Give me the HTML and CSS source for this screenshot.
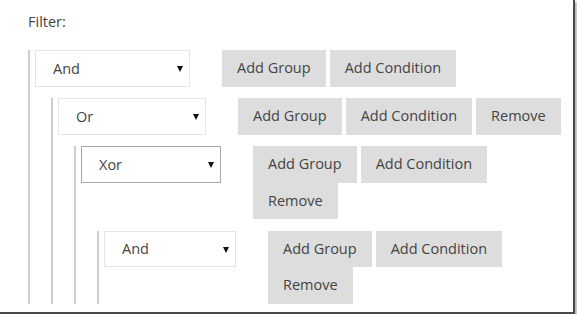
FILE: index.html
```html
<!DOCTYPE html>
<html lang="en">
<head>
  <meta charset="UTF-8">
  <meta name="viewport" content="width=device-width, initial-scale=1.0">
  <title>Filter builder</title>
  <link rel="stylesheet" href="styles.css">
</head>
<body>
  <div class="frame">
    <div class="filter-label">Filter:</div>

    <!-- Root group -->
    <div class="group">
      <div class="group-row">
        <span class="select-wrap">
          <select class="op-select">
            <option selected>And</option>
            <option>Or</option>
            <option>Xor</option>
          </select>
        </span>
        <div class="actions">
          <button class="btn">Add Group</button>
          <button class="btn">Add Condition</button>
        </div>
      </div>

      <div class="group">
        <div class="group-row">
          <span class="select-wrap">
            <select class="op-select">
              <option>And</option>
              <option selected>Or</option>
              <option>Xor</option>
            </select>
          </span>
          <div class="actions">
            <button class="btn">Add Group</button>
            <button class="btn">Add Condition</button>
            <button class="btn">Remove</button>
          </div>
        </div>

        <div class="group">
          <div class="group-row">
            <span class="select-wrap">
              <select class="op-select is-active">
                <option>And</option>
                <option>Or</option>
                <option selected>Xor</option>
              </select>
            </span>
            <div class="actions">
              <button class="btn">Add Group</button>
              <button class="btn">Add Condition</button>
              <button class="btn">Remove</button>
            </div>
          </div>

          <div class="group">
            <div class="group-row">
              <span class="select-wrap">
                <select class="op-select">
                  <option selected>And</option>
                  <option>Or</option>
                  <option>Xor</option>
                </select>
              </span>
              <div class="actions">
                <button class="btn">Add Group</button>
                <button class="btn">Add Condition</button>
                <button class="btn">Remove</button>
              </div>
            </div>
          </div>
        </div>
      </div>
    </div>
  </div>
</body>
</html>
```

FILE: styles.css
```css
body {
  margin: 0;
  padding: 0;
  background: #fff;
  font-family: 'Open Sans', 'Liberation Sans', sans-serif;
  font-size: 14.5px;
  color: #444;
}

/* Screenshot frame */
.frame {
  box-sizing: border-box;
  width: 575px;
  height: 314px;
  padding: 12px 5px 0 28px;
  border-right: 2px solid #4a4a4a;
  border-bottom: 2px solid #4a4a4a;
  box-shadow: 2px 2px 2px rgba(0, 0, 0, 0.3);
  overflow: hidden;
}

.filter-label {
  line-height: 20px;
  margin-bottom: 18px;
}

/* Groups */
.group {
  border-left: 2px solid #cfcfcf;
  padding-left: 5px;
}

.group .group {
  margin-left: 16px;
  margin-top: 11.5px;
}

.group-row {
  display: flex;
  align-items: flex-start;
  gap: 32px;
}

/* Operator select */
.select-wrap {
  position: relative;
  display: block;
  flex: none;
}

.select-wrap::after {
  content: '';
  position: absolute;
  right: 7px;
  top: 16px;
  border-left: 3px solid transparent;
  border-right: 3px solid transparent;
  border-top: 6px solid #111;
  pointer-events: none;
}

.op-select {
  -webkit-appearance: none;
  appearance: none;
  display: block;
  box-sizing: border-box;
  width: 155px;
  height: 36.5px;
  margin: 0;
  padding: 0 0 0 17px;
  font-family: inherit;
  font-size: 14.5px;
  color: #444;
  background: #fff;
  border: 1px solid #e4e4e4;
  border-radius: 0;
  outline: none;
}

.group .group .op-select { width: 148px; }
.group .group .group .op-select { width: 140px; }
.group .group .group .group .op-select { width: 132px; }

.op-select.is-active {
  border-color: #a8a8a8;
}

/* Buttons */
.actions {
  flex: 1;
  display: flex;
  flex-wrap: wrap;
  column-gap: 4px;
  row-gap: 0;
}

.btn {
  height: 36.5px;
  margin: 0;
  padding: 0 15px;
  font-family: inherit;
  font-size: 14.5px;
  line-height: 36.5px;
  color: #444;
  background: #dddddd;
  border: none;
  border-radius: 0;
  cursor: pointer;
}

.btn:hover {
  background: #d2d2d2;
}
```
